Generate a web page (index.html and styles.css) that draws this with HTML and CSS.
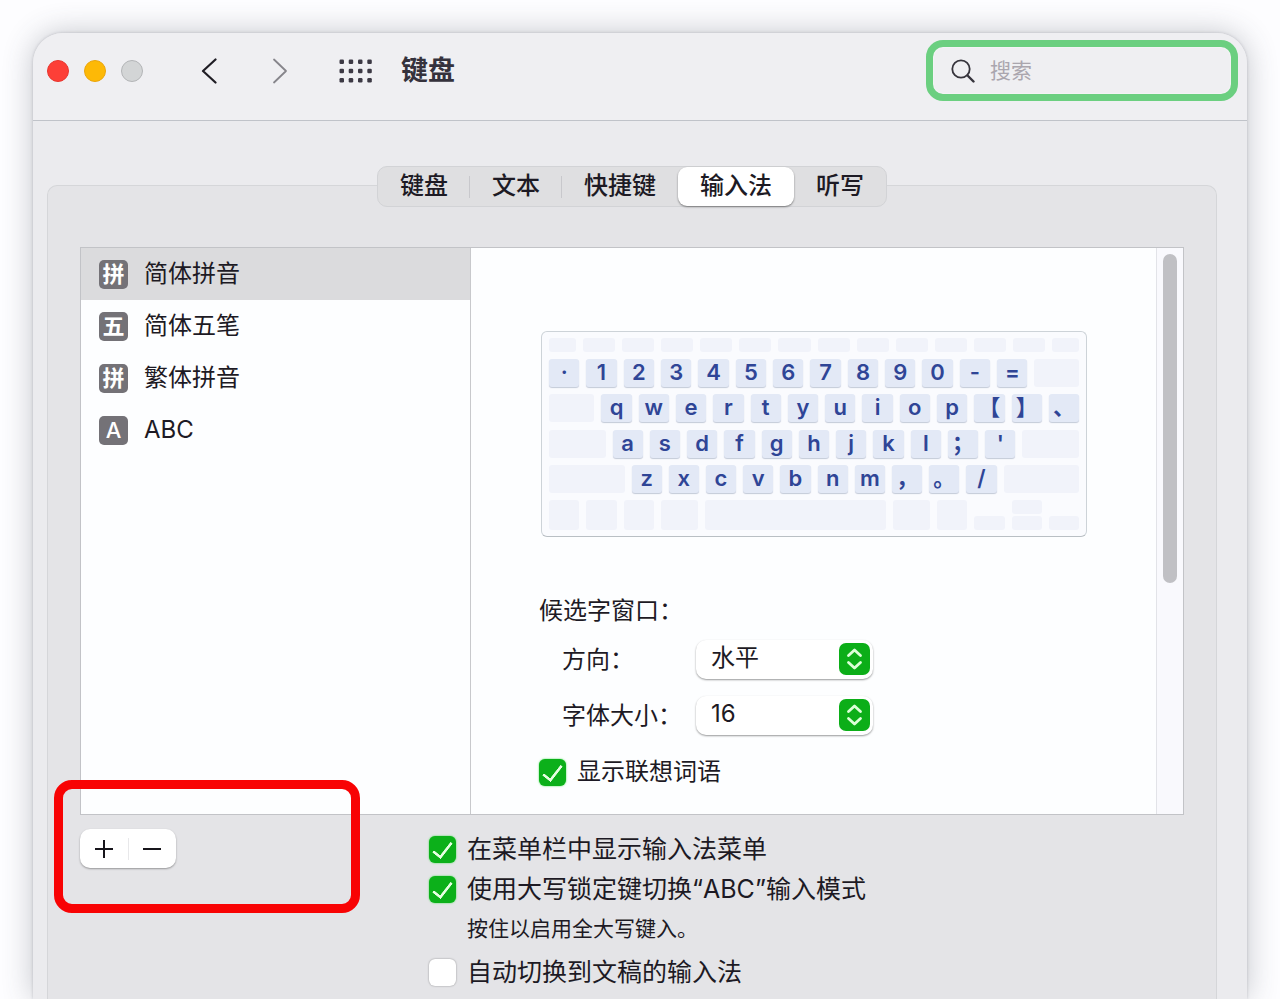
FILE: index.html
```
<!DOCTYPE html>
<html lang="zh-CN">
<head>
    <meta charset="UTF-8">
    <meta name="viewport" content="width=device-width, initial-scale=1.0">
    <title>键盘</title>
    <link rel="stylesheet" href="styles.css">
</head>
<body>
    <div class="window">
        <header class="toolbar">
            <div class="lights">
                <button class="light close" aria-label="关闭"></button>
                <button class="light minimize" aria-label="最小化"></button>
                <button class="light zoom" aria-label="缩放"></button>
            </div>
            <nav class="nav">
                <button class="icon-button" aria-label="后退">
                    <svg width="16" height="28" viewBox="0 0 16 28"><path d="M14.5 2.5 2 14l12.500 11.500" fill="none" stroke="#1f1d24" stroke-width="2.200" stroke-linecap="round" stroke-linejoin="round"/></svg>
                </button>
                <button class="icon-button" aria-label="前进">
                    <svg width="16" height="28" viewBox="0 0 16 28"><path d="M2 2.500 14 14 2 25.500" fill="none" stroke="#86858b" stroke-width="1.800" stroke-linecap="round" stroke-linejoin="round"/></svg>
                </button>
            </nav>
            <button class="icon-button" aria-label="全部显示">
                <svg width="34" height="24" viewBox="0 0 34 24" fill="#3c3944">
                    <rect x="0.500" y="0.500" width="4.500" height="4.500" rx="1.200"/><rect x="9.700" y="0.500" width="4.500" height="4.500" rx="1.200"/><rect x="19" y="0.500" width="4.500" height="4.500" rx="1.200"/><rect x="28.300" y="0.500" width="4.500" height="4.500" rx="1.200"/>
                    <rect x="0.500" y="9.700" width="4.500" height="4.500" rx="1.200"/><rect x="9.700" y="9.700" width="4.500" height="4.500" rx="1.200"/><rect x="19" y="9.700" width="4.500" height="4.500" rx="1.200"/><rect x="28.300" y="9.700" width="4.500" height="4.500" rx="1.200"/>
                    <rect x="0.500" y="19" width="4.500" height="4.500" rx="1.200"/><rect x="9.700" y="19" width="4.500" height="4.500" rx="1.200"/><rect x="19" y="19" width="4.500" height="4.500" rx="1.200"/><rect x="28.300" y="19" width="4.500" height="4.500" rx="1.200"/>
                </svg>
            </button>
            <h1 class="title">键盘</h1>
            <label class="search">
                <svg width="24" height="24" viewBox="0 0 24 24" fill="none" stroke="#36343c" stroke-linecap="round"><circle cx="10" cy="10" r="8.700" stroke-width="1.800"/><path d="m16.500 16.500 6 6" stroke-width="2.400"/></svg>
                <input type="search" placeholder="搜索" aria-label="搜索">
            </label>
        </header>

        <main class="content">
            <div class="tabs">
                <button class="tab">键盘</button>
                <button class="tab">文本</button>
                <button class="tab">快捷键</button>
                <button class="tab active">输入法</button>
                <button class="tab">听写</button>
            </div>

            <section class="panel">
                <div class="split">
                    <ul class="sources">
                        <li class="source selected"><span class="badge">拼</span>简体拼音</li>
                        <li class="source"><span class="badge">五</span>简体五笔</li>
                        <li class="source"><span class="badge">拼</span>繁体拼音</li>
                        <li class="source"><span class="badge latin">A</span>ABC</li>
                    </ul>

                    <div class="detail">
                        <div class="keyboard" id="keyboard"></div>

                        <h2 class="group-title">候选字窗口：</h2>
                        <div class="field">
                            <label for="direction">方向：</label>
                            <span class="select">
                                <select id="direction"><option>水平</option><option>垂直</option></select>
                                <svg class="stepper" width="31" height="32" viewBox="0 0 31 32"><rect width="31" height="32" rx="7" fill="#0cae18"/><path d="m9.500 12.500 6-5.500 6 5.500M9.500 19.500l6 5.500 6-5.500" fill="none" stroke="#dcffd8" stroke-width="2.800" stroke-linecap="round" stroke-linejoin="round"/></svg>
                            </span>
                        </div>
                        <div class="field">
                            <label for="size">字体大小：</label>
                            <span class="select">
                                <select id="size"><option>16</option><option>18</option></select>
                                <svg class="stepper" width="31" height="32" viewBox="0 0 31 32"><rect width="31" height="32" rx="7" fill="#0cae18"/><path d="m9.500 12.500 6-5.500 6 5.500M9.500 19.500l6 5.500 6-5.500" fill="none" stroke="#dcffd8" stroke-width="2.800" stroke-linecap="round" stroke-linejoin="round"/></svg>
                            </span>
                        </div>
                        <label class="check"><input type="checkbox" checked>显示联想词语</label>
                    </div>

                    <div class="scrollbar"><div class="thumb"></div></div>
                </div>

                <div class="footer">
                    <div class="footer-left">
                        <div class="add-remove">
                            <button aria-label="添加"><svg width="20" height="20" viewBox="0 0 20 20"><path d="M10 1v18M1 10h18" stroke="#17151b" stroke-width="2"/></svg></button>
                            <button aria-label="移除"><svg width="20" height="20" viewBox="0 0 20 20"><path d="M1 10h18" stroke="#17151b" stroke-width="2"/></svg></button>
                        </div>
                        <div class="highlight"></div>
                    </div>
                    <div class="options">
                        <label class="check"><input type="checkbox" checked>在菜单栏中显示输入法菜单</label>
                        <label class="check"><input type="checkbox" checked>使用大写锁定键切换“ABC”输入模式</label>
                        <p class="note">按住以启用全大写键入。</p>
                        <label class="check"><input type="checkbox">自动切换到文稿的输入法</label>
                    </div>
                </div>
            </section>
        </main>
    </div>

    <script>
        // Each row: a number is a blank key of that relative width, a string is a run of lettered keys
        const ROWS = [
            [27, 32, 32, 32, 32, 32, 32, 32, 32, 32, 32, 32, 32, 27],
            ['·1234567890-=', 44],
            [45, 'qwertyuiop【】、'],
            [56, 'asdfghjkl；\'', 56],
            [75, 'zxcvbnm，。/', 75],
            [30, 30, 30, 37, 179, 37, 30, 'arrows']
        ];

        function addKey(parent, width, className, text) {
            const key = document.createElement('div');
            key.className = className;
            key.style.flexGrow = width;
            key.textContent = text || '';
            parent.appendChild(key);
            return key;
        }

        function createKeyboard() {
            const keyboard = document.getElementById('keyboard');

            ROWS.forEach(row => {
                const line = document.createElement('div');
                line.className = 'key-row';
                row.forEach(item => {
                    if (typeof item === 'number') {
                        addKey(line, item, 'key blank');
                    } else if (item === 'arrows') {
                        [1, 2, 1].forEach(count => {
                            const stack = addKey(line, 30, 'key-stack');
                            for (let i = 0; i < count; i++) {
                                addKey(stack, 0, 'key blank half');
                            }
                        });
                    } else {
                        [...item].forEach(char => addKey(line, 30, 'key', char));
                    }
                });
                keyboard.appendChild(line);
            });
        }

        createKeyboard();
    </script>
</body>
</html>
```
FILE: styles.css
```
*,
*::after {
    margin: 0;
    padding: 0;
    box-sizing: border-box;
}

body {
    display: flex;
    min-height: 100vh;
    padding: 33px 33px 0;
    overflow-x: hidden;
    font-family: Inter, "Noto Sans CJK SC", sans-serif;
    font-size: 24px;
    line-height: 32px;
    color: #1d1a24;
    background: #fdfdff;
}

button,
input,
select {
    font: inherit;
    color: inherit;
    border: none;
    background: none;
}

svg {
    display: block;
}

.window {
    flex: 1;
    display: flex;
    flex-direction: column;
    border-radius: 30px 30px 0 0;
    background: #ebebee;
    box-shadow: 0 0 3px rgba(60, 60, 75, 0.25), 0 0 30px rgba(60, 65, 80, 0.3);
}

/* Toolbar */
.toolbar {
    display: flex;
    align-items: center;
    padding: 7px 9px 19px 14px;
    border-bottom: 1px solid #c0c3c9;
    border-radius: 30px 30px 0 0;
    background: #efeff2;
}

.lights {
    display: flex;
    gap: 15px;
}

.light {
    width: 22px;
    height: 22px;
    border-radius: 50%;
}

.close {
    background: #fd3f37;
    border: 1px solid #e8362f;
}

.minimize {
    background: #fdb906;
    border: 1px solid #eba50c;
}

.zoom {
    background: #d3d5d6;
    border: 1px solid #b3b5b7;
}

.nav {
    display: flex;
    gap: 55px;
    margin: 0 51px 0 58px;
}

.title {
    margin-left: 28px;
    font-size: 27px;
    font-weight: 700;
    line-height: 40px;
    color: #35323c;
}

.search {
    display: flex;
    align-items: center;
    gap: 15px;
    width: 312px;
    height: 61px;
    margin-left: auto;
    padding: 0 18px;
    border: 7px solid #6bcf80;
    border-radius: 17px;
    box-shadow: inset 0 0 2px #ffffff;
}

.search input {
    flex: 1;
    min-width: 0;
    font-size: 21px;
    outline: none;
}

.search input::placeholder {
    color: #aaa6ae;
}

/* Tabs sit over the top edge of the panel */
.content {
    flex: 1;
    display: flex;
    flex-direction: column;
    padding: 45px 30px 0 14px;
}

.tabs {
    display: flex;
    align-self: center;
    height: 41px;
    margin-bottom: -22px;
    border: 1px solid #d2d3d6;
    border-radius: 10px;
    background: #dfdfe1;
    z-index: 1;
}

.tab {
    display: flex;
    align-items: center;
    padding: 0 22px 2px;
    font-weight: 500;
    background: linear-gradient(#c8c8cc, #c8c8cc) right center / 1px 22px no-repeat;
}

.tab:nth-child(3),
.tab:last-child {
    background: none;
}

.tab.active {
    border-radius: 9px;
    background: #ffffff;
    box-shadow: 0 1px 2px rgba(0, 0, 0, 0.45);
}

.panel {
    flex: 1;
    padding: 61px 32px 0;
    border: 1px solid #d5d6d9;
    border-bottom: none;
    border-radius: 10px 10px 0 0;
    background: #e4e4e7;
}

.split {
    display: flex;
    height: 568px;
    border: 1px solid #c2c3c7;
    background: #fdfeff;
}

/* Input source list */
.sources {
    width: 390px;
    border-right: 1px solid #c8c9cc;
    list-style: none;
}

.source {
    display: flex;
    align-items: center;
    gap: 16px;
    height: 52px;
    padding-left: 18px;
}

.source.selected {
    background: #dbdbdd;
}

.badge {
    display: flex;
    align-items: center;
    justify-content: center;
    width: 29px;
    height: 29px;
    border-radius: 5px;
    font-size: 22px;
    font-weight: 700;
    line-height: 28px;
    color: #ffffff;
    background: #747277;
}

.badge.latin {
    font-weight: 500;
}

/* Detail pane */
.detail {
    flex: 1;
    padding: 83px 69px 0 70px;
}

.keyboard {
    display: flex;
    flex-direction: column;
    justify-content: space-between;
    height: 206px;
    padding: 6px 7px;
    border: 1px solid #cdd3d8;
    border-bottom-color: #b9bfc4;
    border-radius: 6px;
    background: #fafbfe;
}

.key-row {
    display: flex;
    gap: 7px;
    height: 28px;
}

.key-row:first-child {
    height: 14px;
}

.key-row:last-child {
    height: 30px;
}

.key {
    display: flex;
    flex: 1 1 0;
    align-items: center;
    justify-content: center;
    width: 0;
    padding-bottom: 2px;
    border-radius: 3px;
    font-size: 22px;
    font-weight: 600;
    line-height: 26px;
    color: #2f4596;
    background: #e3e9f6;
    box-shadow: 0 1px 1px #c3cad8;
}

.key.blank {
    background: #f1f3fa;
    box-shadow: none;
}

.key-stack {
    display: flex;
    flex: 1 1 0;
    flex-direction: column;
    justify-content: flex-end;
    gap: 2px;
}

.key.half {
    flex: none;
    width: 100%;
    height: 14px;
}

.group-title {
    margin: 56px 0 11px -2px;
    font-size: 24px;
    font-weight: 400;
    line-height: 36px;
}

.field {
    display: flex;
    align-items: center;
    height: 39px;
    margin: 0 0 17px 21px;
}

.field label {
    width: 134px;
}

.select {
    position: relative;
}

.select select {
    display: block;
    width: 177px;
    height: 39px;
    padding: 0 40px 3px 15px;
    border-radius: 10px;
    background: #ffffff;
    box-shadow: 0 1px 2px rgba(0, 0, 0, 0.4);
    appearance: none;
}

.stepper {
    position: absolute;
    top: 3px;
    right: 3px;
    pointer-events: none;
}

.check {
    display: flex;
    align-items: center;
    gap: 11px;
    height: 40px;
}

.detail .check {
    margin-left: -2px;
}

.check input {
    position: relative;
    width: 27px;
    height: 27px;
    border-radius: 6px;
    background: #ffffff;
    box-shadow: 0 0 2px rgba(0, 0, 0, 0.4);
    appearance: none;
}

.check input:checked {
    background: #0cb01a;
    box-shadow: 0 0 2px #3fdc4a;
}

.check input:checked::after {
    content: "";
    position: absolute;
    top: 2px;
    left: 8px;
    width: 11px;
    height: 20px;
    border: solid #e6ffe2;
    border-width: 0 3px 3px 0;
    border-radius: 1px;
    transform: rotate(38deg);
}

.scrollbar {
    width: 27px;
    padding: 6px;
    border-left: 1px solid #e2e3e8;
    background: #f9f9fd;
}

.thumb {
    width: 14px;
    height: 329px;
    border-radius: 7px;
    background: #c0c0c4;
}

/* Footer below the split view */
.footer {
    display: flex;
    padding-top: 14px;
}

.footer-left {
    position: relative;
    width: 349px;
}

.add-remove {
    display: flex;
    width: 96px;
    height: 39px;
    border-radius: 10px;
    background: #ffffff;
    box-shadow: 0 1px 2px rgba(0, 0, 0, 0.35);
}

.add-remove button {
    display: flex;
    flex: 1;
    align-items: center;
    justify-content: center;
}

.add-remove button + button {
    background: linear-gradient(#e8e8ea, #e8e8ea) left center / 1px 22px no-repeat;
}

.highlight {
    position: absolute;
    top: -49px;
    left: -26px;
    width: 306px;
    height: 133px;
    border: 9px solid #f80304;
    border-radius: 18px;
    pointer-events: none;
}

.options .check {
    font-size: 25px;
}

.note {
    margin: 0 0 3px 38px;
    font-size: 21px;
    line-height: 40px;
}
```
